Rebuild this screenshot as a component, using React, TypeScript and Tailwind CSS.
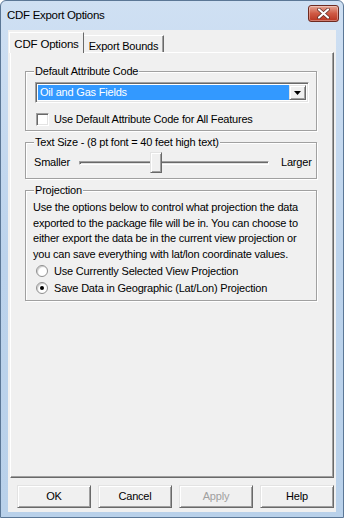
import React from 'react'

const raised =
  'border border-t-[#e3e3e3] border-l-[#e3e3e3] border-r-[#696969] border-b-[#696969] shadow-[inset_1px_1px_0_#ffffff,inset_-1px_-1px_0_#a0a0a0]'
const sunken =
  'border border-t-[#a0a0a0] border-l-[#a0a0a0] border-r-[#ffffff] border-b-[#ffffff] shadow-[inset_1px_1px_0_#696969,inset_-1px_-1px_0_#e3e3e3]'

function Group({ label, className, children }: { label: string; className: string; children: React.ReactNode }) {
  return (
    <div
      className={`relative ml-[14px] w-[292px] border border-[#a0a0a0] shadow-[inset_1px_1px_0_#ffffff,1px_1px_0_#ffffff] ${className}`}
    >
      <span className="absolute top-[-7px] left-[8px] bg-[#f0f0f0] px-[1px] leading-[13px]">{label}</span>
      {children}
    </div>
  )
}

function Radio({ checked, label }: { checked?: boolean; label: string }) {
  return (
    <div className="flex h-[17px] items-center">
      <span className="ml-[2px] flex h-[12px] w-[12px] items-center justify-center rounded-full border border-[#8f8f8f] bg-white shadow-[inset_1px_1px_1px_#c8c8c8]">
        {checked && <span className="h-[4px] w-[4px] rounded-full bg-black" />}
      </span>
      <span className="ml-[6px]">{label}</span>
    </div>
  )
}

function Button({ label, disabled }: { label: string; disabled?: boolean }) {
  return (
    <div
      className={`flex h-[23px] w-[74px] items-center justify-center bg-[#f0f0f0] ${raised} ${
        disabled ? 'text-[#a0a0a0]' : 'text-black'
      }`}
    >
      {label}
    </div>
  )
}

export default function App() {
  return (
    <div className="flex h-[518px] w-[344px] flex-col rounded-t-[6px] border border-[#5b7796] bg-gradient-to-b from-[#cfe0f3] via-[#bcd3ec] to-[#b9d1ea] font-['Liberation_Sans',Arial,sans-serif] text-[11px] tracking-[-0.2px] text-black">
      {/* title bar */}
      <div className="flex h-[29px] items-center justify-between pl-[6px] pr-[4px]">
        <span className="text-[11.5px] tracking-[-0.3px] text-black">CDF Export Options</span>
        <div className="mb-[4px] flex h-[17px] w-[31px] items-center justify-center rounded-[3px] border border-[#6e2a20] bg-gradient-to-b from-[#e4a493] via-[#cf5a44] to-[#b8341f] shadow-[inset_0_0_0_1px_rgba(255,255,255,0.35)]">
          <svg width="13" height="11" viewBox="0 0 13 11">
            <path d="M2 1.5 L11 9.5 M11 1.5 L2 9.5" stroke="#5a2a24" strokeWidth="3.6" strokeLinecap="round" />
            <path d="M2 1.5 L11 9.5 M11 1.5 L2 9.5" stroke="#ffffff" strokeWidth="2.2" strokeLinecap="round" />
          </svg>
        </div>
      </div>

      {/* client */}
      <div className="mx-[7px] mb-[5px] flex h-[482px] flex-col bg-[#f0f0f0]">
        {/* tabs */}
        <div className="flex h-[22px] items-start pl-[1px]">
          <div className="relative z-10 mt-[2px] flex h-[21px] w-[75px] items-start justify-center border-l border-t border-r border-l-white border-t-white border-r-[#696969] bg-[#f0f0f0] pt-[3px] text-[11.5px]">
            CDF Options
          </div>
          <div className="mt-[5px] flex h-[17px] w-[80px] items-start justify-center border-t border-r border-t-white border-r-[#696969] pt-[2px] shadow-[inset_-1px_0_0_#a0a0a0]">
            Export Bounds
          </div>
        </div>

        {/* tab panel */}
        <div className="ml-[2px] flex h-[426px] w-[324px] flex-col border border-t-white border-l-white border-r-[#696969] border-b-[#696969] shadow-[inset_-1px_-1px_0_#a0a0a0]">
          <Group label="Default Attribute Code" className="mt-[18px] h-[60px]">
            {/* combo box */}
            <div className={`ml-[9px] mt-[10px] flex h-[21px] w-[274px] bg-white p-[2px] ${sunken}`}>
              <div className="flex flex-1 items-center bg-[#3399ff] pl-[2px] text-white">Oil and Gas Fields</div>
              <div className={`flex w-[17px] items-center justify-center bg-[#f0f0f0] ${raised}`}>
                <svg width="7" height="4" viewBox="0 0 7 4">
                  <path d="M0 0 H7 L3.5 4 Z" fill="#000" />
                </svg>
              </div>
            </div>
            {/* checkbox */}
            <div className="ml-[10px] mt-[8px] flex items-center">
              <span className={`h-[13px] w-[13px] bg-white ${sunken}`} />
              <span className="ml-[5px]">Use Default Attribute Code for All Features</span>
            </div>
          </Group>

          <Group label="Text Size - (8 pt font = 40 feet high text)" className="mt-[11px] h-[37px]">
            <div className="ml-[8px] mt-[9px] flex h-[21px] items-center">
              <span className="w-[45px]">Smaller</span>
              <div className="relative flex h-[21px] w-[190px] items-center">
                <div className="h-[4px] w-full border border-t-[#a0a0a0] border-l-[#a0a0a0] border-r-white border-b-white bg-[#e3e3e3] shadow-[inset_1px_1px_0_#696969]" />
                <div className={`absolute left-[71px] top-0 h-[21px] w-[12px] bg-[#f0f0f0] ${raised}`} />
              </div>
              <span className="ml-[12px]">Larger</span>
            </div>
          </Group>

          <Group label="Projection" className="mt-[11px] h-[111px]">
            <div className="ml-[7px] mt-[9px] leading-[15.6px]">
              <div>Use the options below to control what projection the data</div>
              <div>exported to the package file will be in. You can choose to</div>
              <div>either export the data be in the current view projection or</div>
              <div>you can save everything with lat/lon coordinate values.</div>
            </div>
            <div className="ml-[8px]">
              <Radio label="Use Currently Selected View Projection" />
              <Radio checked label="Save Data in Geographic (Lat/Lon) Projection" />
            </div>
          </Group>
        </div>

        {/* buttons */}
        <div className="ml-[9px] mt-[7px] flex gap-[7px]">
          <Button label="OK" />
          <Button label="Cancel" />
          <Button label="Apply" disabled />
          <Button label="Help" />
        </div>
      </div>
    </div>
  )
}
